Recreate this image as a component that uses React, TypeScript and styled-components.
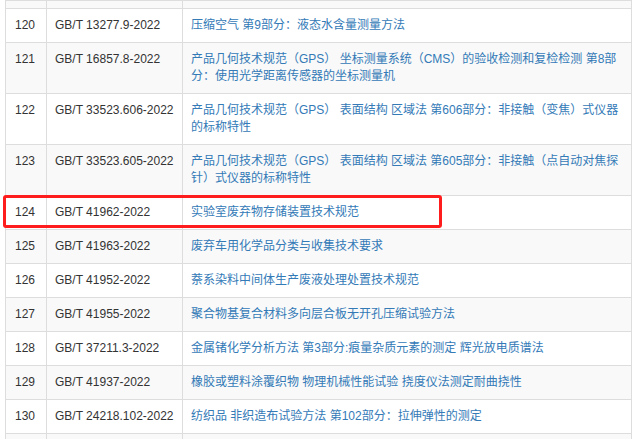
import React from "react";
import styled, { createGlobalStyle } from "styled-components";

const GlobalStyle = createGlobalStyle`
  html, body {
    margin: 0;
    padding: 0;
    background: #fff;
    overflow: hidden;
  }
  body {
    font-family: "Liberation Sans", "Noto Sans CJK SC", Arial, sans-serif;
    font-size: 12px;
    color: #333;
  }
`;

const Page = styled.div`
  position: relative;
  width: 634px;
  height: 439px;
  overflow: hidden;
  padding-left: 5px;
  box-sizing: border-box;
`;

const Table = styled.table`
  width: 626px;
  border-collapse: collapse;
  table-layout: fixed;
`;

const Row = styled.tr<{ $striped: boolean }>`
  background: ${(p) => (p.$striped ? "#f9f9f9" : "#fff")};
`;

const Cell = styled.td`
  border: 1px solid #ddd;
  padding: 8px 8px 8px 8px;
  line-height: 17px;
  vertical-align: top;
`;

const NumCell = styled(Cell)`
  padding-left: 9px;
`;

const CodeCell = styled(Cell)`
  white-space: nowrap;
  overflow: hidden;
`;

const EdgeCell = styled.td<{ $h: number }>`
  border: 1px solid #ddd;
  padding: 0;
  height: ${(p) => p.$h}px;
`;

const TitleLink = styled.a`
  color: #337ab7;
  text-decoration: none;
`;

const Highlight = styled.div`
  position: absolute;
  left: 3px;
  top: 195px;
  width: 439px;
  height: 33px;
  border: 3px solid #ff1c1c;
  border-radius: 3px;
  box-sizing: border-box;
  pointer-events: none;
`;

type Standard = { no: number; code: string; title: string };

const standards: Standard[] = [
  { no: 120, code: "GB/T 13277.9-2022", title: "压缩空气 第9部分：液态水含量测量方法" },
  {
    no: 121,
    code: "GB/T 16857.8-2022",
    title:
      "产品几何技术规范（GPS） 坐标测量系统（CMS）的验收检测和复检检测 第8部分：使用光学距离传感器的坐标测量机",
  },
  {
    no: 122,
    code: "GB/T 33523.606-2022",
    title: "产品几何技术规范（GPS） 表面结构 区域法 第606部分：非接触（变焦）式仪器的标称特性",
  },
  {
    no: 123,
    code: "GB/T 33523.605-2022",
    title: "产品几何技术规范（GPS） 表面结构 区域法 第605部分：非接触（点自动对焦探针）式仪器的标称特性",
  },
  { no: 124, code: "GB/T 41962-2022", title: "实验室废弃物存储装置技术规范" },
  { no: 125, code: "GB/T 41963-2022", title: "废弃车用化学品分类与收集技术要求" },
  { no: 126, code: "GB/T 41952-2022", title: "萘系染料中间体生产废液处理处置技术规范" },
  { no: 127, code: "GB/T 41955-2022", title: "聚合物基复合材料多向层合板无开孔压缩试验方法" },
  { no: 128, code: "GB/T 37211.3-2022", title: "金属锗化学分析方法 第3部分:痕量杂质元素的测定 辉光放电质谱法" },
  { no: 129, code: "GB/T 41937-2022", title: "橡胶或塑料涂覆织物 物理机械性能试验 挠度仪法测定耐曲挠性" },
  { no: 130, code: "GB/T 24218.102-2022", title: "纺织品 非织造布试验方法 第102部分：拉伸弹性的测定" },
];

const App = () => {
  return (
    <>
      <GlobalStyle />
      <Page>
        <Table>
          <colgroup>
            <col style={{ width: 41 }} />
            <col style={{ width: 136 }} />
            <col style={{ width: 449 }} />
          </colgroup>
          <tbody>
            <Row $striped>
              <EdgeCell $h={7} />
              <EdgeCell $h={7} />
              <EdgeCell $h={7} />
            </Row>
            {standards.map((s) => (
              <Row key={s.no} $striped={s.no % 2 === 1}>
                <NumCell>{s.no}</NumCell>
                <CodeCell>{s.code}</CodeCell>
                <Cell>
                  <TitleLink href="#">{s.title}</TitleLink>
                </Cell>
              </Row>
            ))}
            <Row $striped>
              <EdgeCell $h={10} />
              <EdgeCell $h={10} />
              <EdgeCell $h={10} />
            </Row>
          </tbody>
        </Table>
        <Highlight />
      </Page>
    </>
  );
};

export default App;
